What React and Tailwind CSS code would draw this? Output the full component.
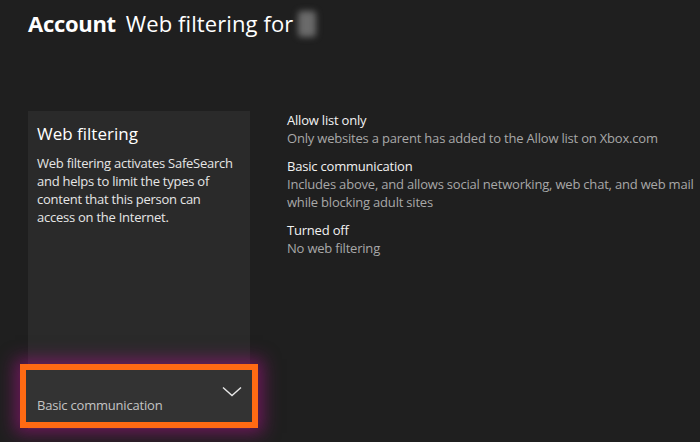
export default function App() {
  const options = [
    { title: "Allow list only", desc: ["Only websites a parent has added to the Allow list on Xbox.com"] },
    {
      title: "Basic communication",
      desc: ["Includes above, and allows social networking, web chat, and web mail", "while blocking adult sites"],
    },
    { title: "Turned off", desc: ["No web filtering"] },
  ];

  return (
    <div className="w-[700px] h-[442px] overflow-hidden bg-[#1f1f1f] text-white font-['Open_Sans',sans-serif]">
      {/* header */}
      <div className="flex items-center h-[47px] pl-[28px]">
        <span className="text-[22px] font-bold tracking-[-0.3px]">Account</span>
        <span className="text-[22px] ml-[10px] tracking-[0.1px]">Web filtering for</span>
        <span className="ml-[5px] w-[18px] h-[26px] bg-[#6a6a6a] blur-[3px] rounded-sm"></span>
      </div>

      <div className="flex mt-[64px]">
        {/* left card */}
        <div className="relative ml-[28px] w-[222px] h-[318px] bg-[#2a2a2a] flex flex-col">
          <div className="px-[9px] pt-[11px]">
            <div className="text-[17px] leading-[24px]">Web filtering</div>
            <p className="mt-[8px] text-[13px] leading-[18px] text-[#e6e6e6] tracking-[-0.25px]">
              Web filtering activates SafeSearch and helps to limit the types of content that this person can access on
              the Internet.
            </p>
          </div>
          <div className="mt-auto -mx-[8px] mb-[1px] border-[6px] border-[#ff6a13] shadow-[0_0_16px_5px_rgba(160,20,130,0.6)]">
            <div className="flex items-end justify-between h-[52px] bg-[#333333] pl-[11px] pr-[10px] pb-[7px]">
              <span className="text-[13px] text-[#c4c4c4] tracking-[-0.2px]">Basic communication</span>
              <svg width="20" height="12" viewBox="0 0 20 12" className="mb-[17px]">
                <path d="M1 1.5 L10 9.5 L19 1.5" fill="none" stroke="#e8e8e8" strokeWidth="1.4" />
              </svg>
            </div>
          </div>
        </div>

        {/* right options */}
        <div className="ml-[37px] flex flex-col gap-[10px]">
          {options.map((o) => (
            <div key={o.title} className="text-[13px] leading-[18px] tracking-[-0.2px]">
              <div className="text-[#f2f2f2]">{o.title}</div>
              {o.desc.map((d) => (
                <div key={d} className="text-[#a8a8a8]">
                  {d}
                </div>
              ))}
            </div>
          ))}
        </div>
      </div>
    </div>
  );
}
